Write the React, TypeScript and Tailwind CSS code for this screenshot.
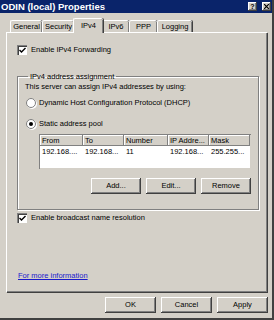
import { useState } from 'react';

const raised =
  'shadow-[inset_-1px_-1px_#404040,inset_1px_1px_#ffffff,inset_-2px_-2px_#808080]';

function Btn({ label, className = '' }: { label: string; className?: string }) {
  return (
    <button
      className={`h-[16px] bg-[#d4d0c8] text-black flex items-center justify-center ${raised} ${className}`}
    >
      {label}
    </button>
  );
}

function Check({ checked, label }: { checked: boolean; label: string }) {
  return (
    <label className="flex items-center gap-[4px]">
      <span className="w-[10px] h-[10px] bg-white shadow-[inset_1px_1px_#808080,inset_2px_2px_#404040,inset_-1px_-1px_#ffffff] flex items-center justify-center">
        {checked && (
          <svg width="7" height="7" viewBox="0 0 7 7">
            <path d="M0.5 3 L2.5 5 L6.5 1" stroke="#000" strokeWidth="1.4" fill="none" />
          </svg>
        )}
      </span>
      <span>{label}</span>
    </label>
  );
}

function Radio({ checked, label }: { checked: boolean; label: string }) {
  return (
    <label className="flex items-center gap-[3px]">
      <span className="w-[10px] h-[10px] rounded-full bg-white border border-[#808080] shadow-[1px_1px_#ffffff] flex items-center justify-center">
        {checked && <span className="w-[4px] h-[4px] rounded-full bg-black" />}
      </span>
      <span>{label}</span>
    </label>
  );
}

const tabs = ['General', 'Security', 'IPv4', 'IPv6', 'PPP', 'Logging'];
const tabWidths = ['w-[32px]', 'w-[32px]', 'w-[30px]', 'w-[27px]', 'w-[28px]', 'w-[35px]'];

const cols = [
  { head: 'From', w: 'w-[43px]', val: '192.168....' },
  { head: 'To', w: 'w-[41px]', val: '192.168...' },
  { head: 'Number', w: 'w-[44px]', val: '11' },
  { head: 'IP Addre...', w: 'w-[41px]', val: '192.168...' },
  { head: 'Mask', w: 'w-[41px]', val: '255.255...' },
];

export default function App() {
  const [tab] = useState('IPv4');

  return (
    <div className="w-[274px] h-[320px] bg-[#d4d0c8] flex flex-col text-[7.5px] leading-none text-black font-['Tahoma','Liberation_Sans',sans-serif] border-r-2 border-b-2 border-r-[#404040] border-b-[#404040] overflow-hidden">
      {/* Title bar */}
      <div className="h-[13px] bg-[#0a246a] flex items-center pl-[1px] pr-[1px] shrink-0">
        <span className="text-white font-bold text-[9.5px]">ODIN (local) Properties</span>
        <div className="flex-1" />
        <div className={`w-[9px] h-[9px] bg-[#d4d0c8] ${raised} flex items-center justify-center text-[7px] font-bold`}>?</div>
        <div className={`ml-[5px] w-[9px] h-[9px] bg-[#d4d0c8] ${raised} flex items-center justify-center`}>
          <svg width="5" height="5" viewBox="0 0 5 5">
            <path d="M0 0 L5 5 M5 0 L0 5" stroke="#000" strokeWidth="1.2" />
          </svg>
        </div>
      </div>

      {/* Tabs */}
      <div className="mt-[5px] ml-[10px] h-[14px] flex items-end shrink-0">
        {tabs.map((t, i) => {
          const active = t === tab;
          return (
            <div
              key={t}
              className={`${tabWidths[i]} flex items-center justify-center bg-[#d4d0c8] border-t border-l border-white rounded-t-[2px] shadow-[inset_-1px_0_#808080,1px_0_#404040] ${
                active ? 'h-[15px] -mb-[1px] z-10 -mx-[1px] relative' : 'h-[12px]'
              }`}
            >
              {t}
            </div>
          );
        })}
      </div>

      {/* Panel */}
      <div className="ml-[6px] w-[261px] h-[260px] shrink-0 border-t border-l border-white shadow-[inset_-1px_-1px_#808080,1px_1px_#404040] flex flex-col pl-[10px] pr-[9px]">
        <div className="mt-[12px]">
          <Check checked label="Enable IPv4 Forwarding" />
        </div>

        <fieldset className="mt-[18px] h-[137px] border border-[#808080] shadow-[inset_1px_1px_#ffffff,1px_1px_#ffffff] pl-[7px] pr-[7px] flex flex-col">
          <legend className="ml-[3px] px-[2px]">IPv4 address assignment</legend>
          <div className="mt-[2px]">This server can assign IPv4 addresses by using:</div>
          <div className="mt-[8px] ml-[1px]">
            <Radio checked={false} label="Dynamic Host Configuration Protocol (DHCP)" />
          </div>
          <div className="mt-[11px] ml-[1px]">
            <Radio checked label="Static address pool" />
          </div>

          <div className="mt-[5px] ml-[14px] w-[212px] h-[35px] bg-white shadow-[inset_1px_1px_#808080,inset_-1px_-1px_#d4d0c8] p-[1px] flex flex-col">
            <div className="flex h-[11px]">
              {cols.map((c) => (
                <div
                  key={c.head}
                  className={`${c.w} h-full bg-[#d4d0c8] pl-[2px] flex items-center shadow-[inset_-1px_-1px_#808080,inset_1px_1px_#ffffff] whitespace-nowrap overflow-hidden`}
                >
                  {c.head}
                </div>
              ))}
            </div>
            <div className="flex h-[10px] mt-[1px]">
              {cols.map((c) => (
                <div key={c.head} className={`${c.w} pl-[2px] flex items-center whitespace-nowrap overflow-hidden`}>
                  {c.val}
                </div>
              ))}
            </div>
          </div>

          <div className="mt-[9px] flex gap-[5px] ml-[66px]">
            <Btn label="Add..." className="w-[50px] h-[15px]" />
            <Btn label="Edit..." className="w-[50px] h-[15px]" />
            <Btn label="Remove" className="w-[50px] h-[15px]" />
          </div>
        </fieldset>

        <div className="mt-[3px]">
          <Check checked label="Enable broadcast name resolution" />
        </div>

        <div className="flex-1" />
        <a href="#" className="mb-[13px] ml-[1px] text-[#1a1acc] underline">
          For more information
        </a>
      </div>

      {/* Dialog buttons */}
      <div className="mt-[5px] flex justify-end gap-[5px] pr-[4px]">
        <Btn label="OK" className="w-[51px]" />
        <Btn label="Cancel" className="w-[51px]" />
        <Btn label="Apply" className="w-[51px]" />
      </div>
    </div>
  );
}
